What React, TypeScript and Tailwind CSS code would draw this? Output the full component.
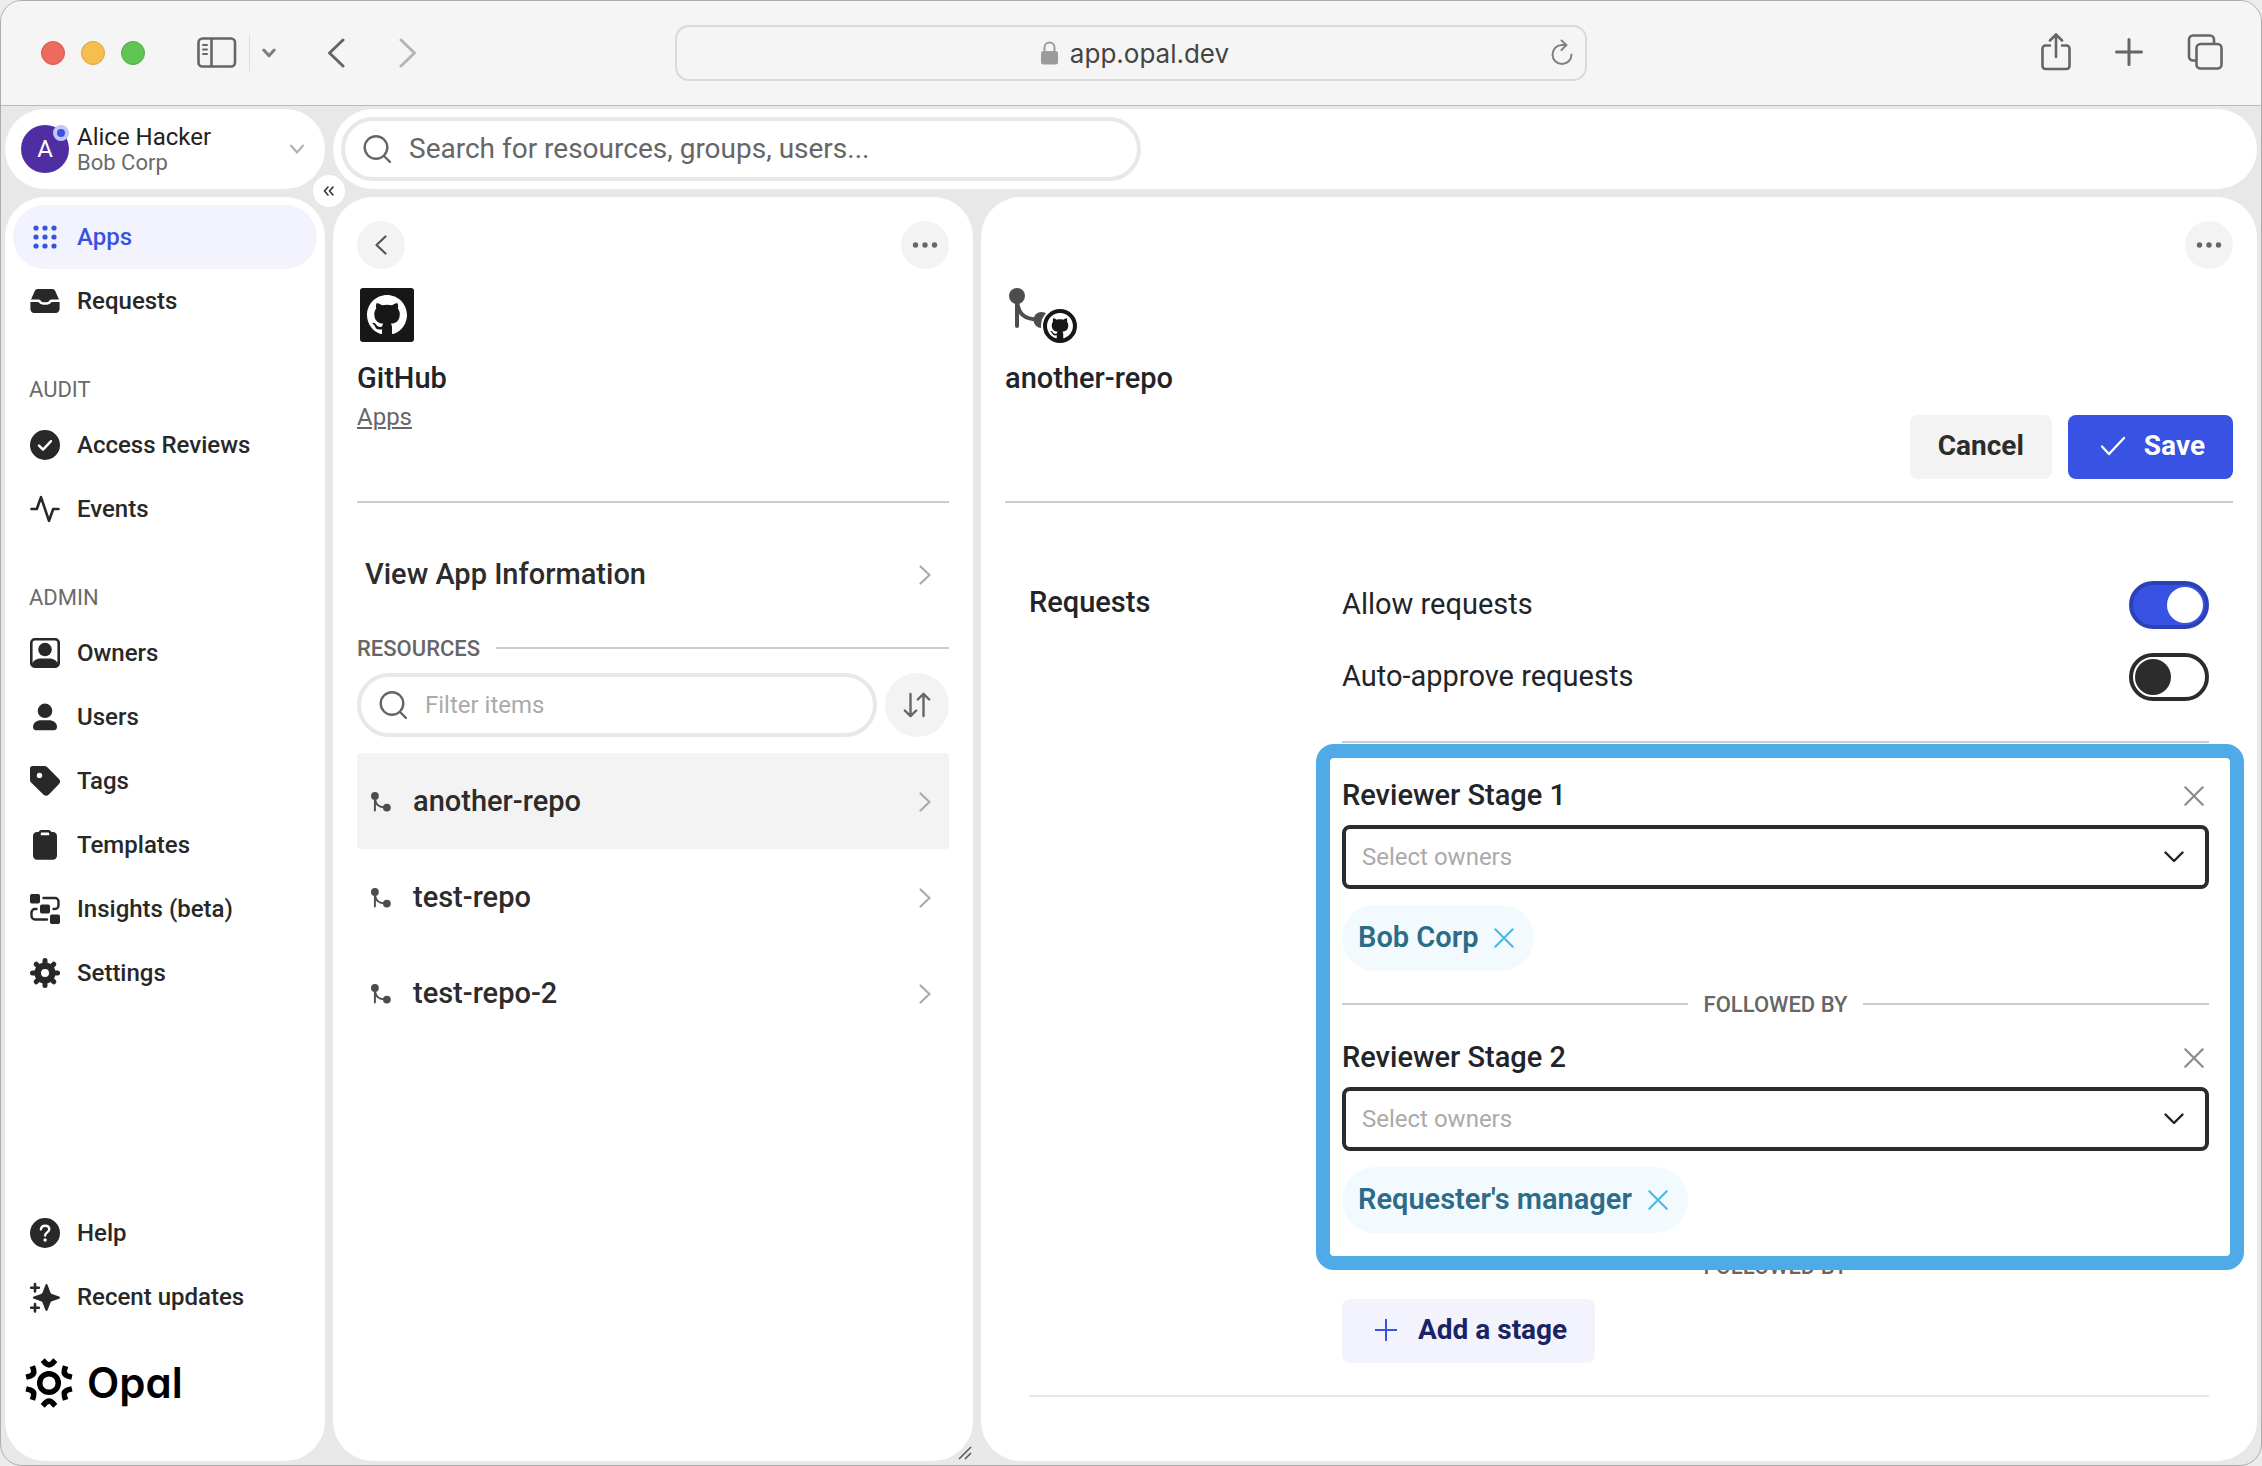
import React, { useState } from 'react';
import { BsGithub } from 'react-icons/bs';

interface IconProps {
  className?: string;
}

const AppsIcon = () => (
  <svg viewBox="0 0 32 32" className="w-8 h-8" fill="currentColor">
    {[7, 16, 25].map((y) => [7, 16, 25].map((x) => <circle key={`${x}-${y}`} cx={x} cy={y} r="2.6" />))}
  </svg>
);

const RequestsIcon = () => (
  <svg viewBox="0 0 32 32" className="w-8 h-8" fill="currentColor">
    <path d="M8.6 4h14.8c1.2 0 2.2.7 2.7 1.8L30 14.4h-7.600c-1 0-1.700.6-2.200 1.300-.7 1-1.500 1.500-4.200 1.500s-3.500-.5-4.200-1.500c-.5-.7-1.200-1.300-2.200-1.300H2l3.900-8.600C6.400 4.700 7.400 4 8.600 4z" />
    <path d="M1.400 17h7.400c.6 0 .9.300 1.300.8 1.200 1.500 2.900 2 5.900 2s4.700-.5 5.900-2c.4-.5.700-.8 1.300-.8h7.400v7c0 2.200-1.600 4-3.800 4H5.200c-2.200 0-3.800-1.800-3.800-4z" />
  </svg>
);

const ReviewsIcon = () => (
  <svg viewBox="0 0 32 32" className="w-8 h-8" fill="none">
    <circle cx="16" cy="16" r="15" fill="currentColor" />
    <path d="M10 16.600l4 4 8-8.400" stroke="#fff" strokeWidth="2.400" strokeLinecap="round" strokeLinejoin="round" />
  </svg>
);

const EventsIcon = () => (
  <svg viewBox="0 0 32 32" className="w-8 h-8" fill="none" stroke="currentColor" strokeWidth="2.600" strokeLinecap="round" strokeLinejoin="round">
    <path d="M2.500 16h5.300L12 4.200l8 23.600L24.200 16h5.300" />
  </svg>
);

const OwnersIcon = () => (
  <svg viewBox="0 0 32 32" className="w-8 h-8" fill="currentColor">
    <rect x="2.300" y="2.300" width="27.400" height="27.400" rx="3.500" fill="none" stroke="currentColor" strokeWidth="2.600" />
    <circle cx="16" cy="12.500" r="6.800" />
    <path d="M3 27c1.500-4 5-5.500 9-5.500h8c4 0 7.500 1.500 9 5.500v1.500a2 2 0 0 1-2 2H5a2 2 0 0 1-2-2z" />
  </svg>
);

const UsersIcon = () => (
  <svg viewBox="0 0 32 32" className="w-8 h-8" fill="currentColor">
    <circle cx="16" cy="9.800" r="7.300" />
    <path d="M4 26c0-4.600 3.800-6.800 8-6.800h8c4.200 0 8 2.200 8 6.800 0 2-1.200 3.200-3 3.200H7c-1.800 0-3-1.200-3-3.200z" />
  </svg>
);

const TagsIcon = () => (
  <svg viewBox="0 0 32 32" className="w-8 h-8" fill="currentColor">
    <path fillRule="evenodd" d="M3.500 1h12c1 0 1.900.4 2.600 1.100l11.900 12c1.400 1.400 1.400 3.600 0 5L19.600 29.800c-1.400 1.400-3.600 1.400-5 0L2.100 17.600C1.400 16.900 1 16 1 15V3.500A2.500 2.500 0 0 1 3.500 1zm7 6.700a2.700 2.700 0 1 0 0 5.400 2.700 2.700 0 0 0 0-5.400z" />
  </svg>
);

const TemplatesIcon = () => (
  <svg viewBox="0 0 32 32" className="w-8 h-8" fill="currentColor">
    <path fillRule="evenodd" d="M12.500 1h7c1.500 0 2.300.7 2.800 2H24c2.300 0 4 1.700 4 4v19.500c0 2.500-1.700 4.200-4 4.200H8c-2.300 0-4-1.700-4-4.200V7c0-2.300 1.700-4 4-4h1.700c.5-1.300 1.300-2 2.800-2zm.5 2.400c-.7 0-1.200.5-1.200 1.200v1.700h8.400V4.600c0-.7-.5-1.200-1.200-1.200z" />
  </svg>
);

const InsightsIcon = () => (
  <svg viewBox="0 0 32 32" className="w-8 h-8" fill="currentColor">
    <rect x="1" y="1" width="10" height="9.500" rx="1.800" />
    <rect x="11" y="11.500" width="10" height="9" rx="1.800" />
    <rect x="21" y="21.500" width="10" height="9.500" rx="1.800" />
    <path d="M14.500 5H26a3.500 3.500 0 0 1 3.500 3.500v4A3.500 3.500 0 0 1 26 16h-1.500M7.500 16H6a3.500 3.500 0 0 0-3.500 3.500V23A3.500 3.500 0 0 0 6 26.500h12" fill="none" stroke="currentColor" strokeWidth="2.400" strokeLinecap="round" />
  </svg>
);

const SettingsIcon = () => (
  <svg viewBox="0 0 32 32" className="w-8 h-8" fill="none" stroke="currentColor">
    <circle cx="16" cy="16" r="7.300" strokeWidth="6.600" />
    {[0, 45, 90, 135, 180, 225, 270, 315].map((a) => (
      <path key={a} d="M16 7V3.500" strokeWidth="5" strokeLinecap="round" transform={`rotate(${a} 16 16)`} />
    ))}
  </svg>
);

const HelpIcon = () => (
  <svg viewBox="0 0 32 32" className="w-8 h-8" fill="none">
    <circle cx="16" cy="16" r="15" fill="currentColor" />
    <path d="M11.900 12.400c.2-2.300 1.900-3.700 4.200-3.700 2.400 0 4.200 1.400 4.200 3.600 0 3.100-4.200 3.100-4.200 6.200" stroke="#fff" strokeWidth="2.400" strokeLinecap="round" />
    <circle cx="16.100" cy="23" r="1.700" fill="#fff" />
  </svg>
);

const UpdatesIcon = () => (
  <svg viewBox="0 0 32 32" className="w-8 h-8" fill="currentColor">
    <path d="M17.500 3c.6 0 .9.400 1.100 1l2.700 7.300c.3.800.8 1.300 1.600 1.600l7.200 2.600c1.200.4 1.200 1.800 0 2.200l-7.200 2.600c-.8.300-1.300.8-1.600 1.600l-2.700 7.100c-.4 1.200-1.800 1.200-2.200 0l-2.700-7.100c-.3-.8-.8-1.300-1.600-1.600l-7.200-2.600c-1.200-.4-1.200-1.800 0-2.200l7.200-2.600c.8-.3 1.300-.8 1.600-1.600L16.400 4c.2-.6.5-1 1.100-1z" />
    <path d="M6 3v7.500M2.200 6.700h7.600M6 23v7.500M2.200 26.700h7.600" stroke="currentColor" strokeWidth="2.600" strokeLinecap="round" />
  </svg>
);

const ChevronRight = ({ className = '' }: IconProps) => (
  <svg viewBox="0 0 12 20" className={`w-3 h-5 ${className}`} fill="none" stroke="currentColor" strokeWidth="2.200" strokeLinecap="round" strokeLinejoin="round">
    <path d="M1.500 1.500L10.500 10l-9 8.500" />
  </svg>
);

const SearchIcon = () => (
  <svg viewBox="0 0 28 28" className="w-7 h-7 shrink-0 text-[#666]" fill="none" stroke="currentColor" strokeWidth="2.400" strokeLinecap="round">
    <circle cx="13" cy="12.500" r="11.300" />
    <path d="M21 21l6 6" />
  </svg>
);

const CloseIcon = ({ className = '' }: IconProps) => (
  <svg viewBox="0 0 20 20" className={`w-5 h-5 ${className}`} fill="none" stroke="currentColor" strokeWidth="2.200" strokeLinecap="round">
    <path d="M1.300 1.300l17.400 17.400M18.700 1.300L1.300 18.700" />
  </svg>
);

const RepoIcon = ({ className = '' }: IconProps) => (
  <svg viewBox="0 0 41 41" className={className} fill="currentColor">
    <circle cx="8" cy="8" r="8" />
    <circle cx="32.500" cy="32" r="8" />
    <path d="M8 10v28M8.500 16c1.500 9 6 15 20 15.500" fill="none" stroke="currentColor" strokeWidth="4" strokeLinecap="round" />
  </svg>
);

const MoreButton = () => (
  <button aria-label="More options" className="flex items-center justify-center w-12 h-12 rounded-full bg-[#f3f3f3] text-[#666]">
    <svg viewBox="0 0 26 6" className="w-[26px] h-[6px]" fill="currentColor">
      <circle cx="3.500" cy="3" r="2.700" />
      <circle cx="13" cy="3" r="2.700" />
      <circle cx="22.500" cy="3" r="2.700" />
    </svg>
  </button>
);

const BrowserToolbar = () => (
  <div className="grid grid-cols-[1fr_minmax(0,912px)_1fr] items-center h-[105px] bg-[#f5f5f5] border-b border-[#bbb] text-[#666]">
    <div className="flex items-center pl-10">
      <div className="flex gap-4">
        <span className="w-6 h-6 rounded-full bg-[#ec6a5e] border border-[#d8574b]" />
        <span className="w-6 h-6 rounded-full bg-[#f4bf4f] border border-[#d9a53c]" />
        <span className="w-6 h-6 rounded-full bg-[#61c554] border border-[#4faa43]" />
      </div>
      <button aria-label="Toggle sidebar" className="ml-[52px]">
        <svg viewBox="0 0 40 32" className="w-10 h-8" fill="none" stroke="currentColor" strokeWidth="2.600" strokeLinecap="round">
          <rect x="1.500" y="1.500" width="36.500" height="28" rx="4" />
          <path d="M14.500 2v27" />
          <path d="M6 8h4M6 12.500h4M6 17h4" strokeWidth="2" />
        </svg>
      </button>
      <span className="ml-3 w-px h-9 bg-[#ddd]" />
      <button aria-label="Tab groups" className="ml-3 text-[#7d7d80]">
        <svg viewBox="0 0 14 10" className="w-[14px] h-[10px]" fill="none" stroke="currentColor" strokeWidth="3" strokeLinecap="round" strokeLinejoin="round">
          <path d="M1.800 2L7 7.800 12.200 2" />
        </svg>
      </button>
      <button aria-label="Back" className="ml-[51px]">
        <svg viewBox="0 0 18 30" className="w-[18px] h-[30px]" fill="none" stroke="currentColor" strokeWidth="3" strokeLinecap="round" strokeLinejoin="round">
          <path d="M16 2L2.500 15 16 28" />
        </svg>
      </button>
      <button aria-label="Forward" className="ml-[54px] text-[#b5b5b5]">
        <svg viewBox="0 0 18 30" className="w-[18px] h-[30px]" fill="none" stroke="currentColor" strokeWidth="3" strokeLinecap="round" strokeLinejoin="round">
          <path d="M2 2l13.500 13L2 28" />
        </svg>
      </button>
    </div>

    <div className="relative flex items-center justify-center gap-3 h-14 pl-2 rounded-[14px] border-2 border-[#dadada]">
      <svg viewBox="0 0 17 24" className="w-[17px] h-6 text-[#9b9b9b]" fill="currentColor">
        <rect x="0" y="10" width="17" height="13.500" rx="2.500" />
        <path d="M3.500 11V6.500a5 5 0 0 1 10 0V11" fill="none" stroke="currentColor" strokeWidth="2" />
      </svg>
      <span className="font-[Inter,sans-serif] text-[26px] text-[#444]">app.opal.dev</span>
      <button aria-label="Reload" className="absolute right-3 text-[#808080]">
        <svg viewBox="0 0 22 28" className="w-[22px] h-7" fill="none" stroke="currentColor" strokeWidth="2" strokeLinecap="round" strokeLinejoin="round">
          <path d="M20.500 15.500a9.500 9.500 0 1 1-9.500-9.500h4M10.500 1.500L15.500 6l-5 5" />
        </svg>
      </button>
    </div>

    <div className="flex items-center justify-end gap-[44px] pr-[38px] pb-0.5">
      <button aria-label="Share">
        <svg viewBox="0 0 30 38" className="w-[30px] h-[38px]" fill="none" stroke="currentColor" strokeWidth="2.600" strokeLinecap="round" strokeLinejoin="round">
          <path d="M9 12.500H4.500a3 3 0 0 0-3 3V33a3 3 0 0 0 3 3h21a3 3 0 0 0 3-3V15.500a3 3 0 0 0-3-3H21M15 24V2M9 7.500L15 1.500l6 6" />
        </svg>
      </button>
      <button aria-label="New tab">
        <svg viewBox="0 0 28 28" className="w-7 h-7" fill="none" stroke="currentColor" strokeWidth="3" strokeLinecap="round">
          <path d="M14 1.500v25M1.500 14h25" />
        </svg>
      </button>
      <button aria-label="Show tabs">
        <svg viewBox="0 0 36 36" className="w-9 h-9" fill="none" stroke="currentColor" strokeWidth="2.600">
          <rect x="9.500" y="10" width="25" height="24.500" rx="4" />
          <path d="M9.500 26.500H6a4 4 0 0 1-4-4V5.500a4 4 0 0 1 4-4h17a4 4 0 0 1 4 4V10" />
        </svg>
      </button>
    </div>
  </div>
);

interface NavItemProps {
  label: string;
  icon: React.ReactNode;
  active?: boolean;
}

const NavItem: React.FC<NavItemProps> = ({ label, icon, active }) => (
  <a
    href="#"
    className={`flex items-center gap-4 h-16 pl-4 rounded-full text-2xl font-medium ${
      active ? 'bg-[#f3f3fd] text-[#3852e3]' : 'text-[#282828]'
    }`}
  >
    {icon}
    <span>{label}</span>
  </a>
);

const NavHeading = ({ children }: { children: React.ReactNode }) => (
  <h2 className="mt-8 h-12 pl-4 text-[22px] leading-[50px] text-[#6b6b6b]">{children}</h2>
);

const OpalLogo = () => (
  <div className="flex items-center gap-[13px] h-[50px] mt-[29px] mb-[53px] pl-[11px] text-black">
    <svg viewBox="-25 -25 50 50" className="w-[50px] h-[50px]" fill="none" stroke="currentColor" strokeWidth="5.500">
      <circle r="9.300" />
      {[0, 60, 120, 180, 240, 300].map((a) => (
        <path key={a} d="M-6.300-22.800L-3.500-19.800Q0-16.600 3.500-19.800L6.300-22.800" transform={`rotate(${a})`} />
      ))}
    </svg>
    <span className="font-[Inter,sans-serif] text-[42px] leading-[50px] font-semibold [font-feature-settings:'cv11']">Opal</span>
  </div>
);

const Sidebar = () => (
  <nav className="flex flex-col w-80 shrink-0 p-2 pb-0 rounded-[40px] bg-white">
    <NavItem label="Apps" icon={<AppsIcon />} active />
    <NavItem label="Requests" icon={<RequestsIcon />} />
    <NavHeading>AUDIT</NavHeading>
    <NavItem label="Access Reviews" icon={<ReviewsIcon />} />
    <NavItem label="Events" icon={<EventsIcon />} />
    <NavHeading>ADMIN</NavHeading>
    <NavItem label="Owners" icon={<OwnersIcon />} />
    <NavItem label="Users" icon={<UsersIcon />} />
    <NavItem label="Tags" icon={<TagsIcon />} />
    <NavItem label="Templates" icon={<TemplatesIcon />} />
    <NavItem label="Insights (beta)" icon={<InsightsIcon />} />
    <NavItem label="Settings" icon={<SettingsIcon />} />
    <div className="mt-auto">
      <NavItem label="Help" icon={<HelpIcon />} />
      <NavItem label="Recent updates" icon={<UpdatesIcon />} />
      <OpalLogo />
    </div>
  </nav>
);

const AccountCard = () => (
  <div className="relative w-80 shrink-0">
    <button className="flex items-center w-full h-20 pl-4 pr-[21px] rounded-full bg-white text-left">
      <span className="relative flex items-center justify-center w-12 h-12 rounded-full bg-[#4f2da3] text-2xl text-white">
        A
        <span className="absolute top-0 right-0 w-4 h-4 rounded-full border-4 border-[#c3c8f6] bg-[#3852e3]" />
      </span>
      <span className="flex-1 pt-0.5 ml-2">
        <span className="block text-2xl leading-[26px] text-[#222]">Alice Hacker</span>
        <span className="block text-[22px] leading-[26px] text-[#6b6b6b]">Bob Corp</span>
      </span>
      <svg viewBox="0 0 14 10" className="w-[14px] h-[10px] text-[#b0b0b0]" fill="none" stroke="currentColor" strokeWidth="2" strokeLinecap="round" strokeLinejoin="round">
        <path d="M1 1.500l6 7 6-7" />
      </svg>
    </button>
    <button
      aria-label="Collapse sidebar"
      className="absolute -right-5 -bottom-[18px] z-10 flex items-center justify-center w-8 h-8 rounded-full bg-white text-[#333]"
    >
      <svg viewBox="0 0 12 10" className="w-3 h-[10px]" fill="none" stroke="currentColor" strokeWidth="1.600" strokeLinecap="round" strokeLinejoin="round">
        <path d="M5 1L1.500 5 5 9M10 1L6.500 5 10 9" />
      </svg>
    </button>
  </div>
);

const repos = ['another-repo', 'test-repo', 'test-repo-2'];

const ResourcePanel = () => (
  <section className="relative w-[640px] shrink-0 p-6 rounded-[40px] bg-white">
    <header className="h-[282px] border-b-2 border-[#ccc]">
      <div className="flex justify-between">
        <button aria-label="Go back" className="flex items-center justify-center w-12 h-12 rounded-full bg-[#f3f3f3] text-[#555]">
          <ChevronRight className="rotate-180" />
        </button>
        <MoreButton />
      </div>
      <div className="flex items-center justify-center w-[54px] h-[54px] mt-[19px] ml-[3px] rounded-[3px] bg-[#181617] text-white">
        <BsGithub size={40} />
      </div>
      <h1 className="mt-4 text-[29px] leading-10 font-medium text-[#212529]">GitHub</h1>
      <a href="#" className="block w-fit text-2xl leading-[38px] text-[#666] underline decoration-2 underline-offset-2">Apps</a>
    </header>

    <a href="#" className="flex items-center justify-between h-24 mt-6 pl-2 pr-[18px] text-[29px] font-medium text-[#2c2c2c]">
      View App Information
      <ChevronRight className="text-[#aaa]" />
    </a>

    <div className="flex items-center gap-4 h-[34px] mt-2">
      <h2 className="text-[22px] font-medium text-[#666]">RESOURCES</h2>
      <span className="flex-1 h-0.5 bg-[#ccc]" />
    </div>

    <div className="flex gap-2 mt-2">
      <label className="flex flex-1 items-center gap-[18px] h-16 px-[18px] rounded-full border-4 border-[#e8e8e8]">
        <SearchIcon />
        <input
          aria-label="Filter items"
          placeholder="Filter items"
          className="w-full text-2xl outline-none placeholder:text-[#aaa]"
        />
      </label>
      <button aria-label="Sort" className="flex items-center justify-center w-16 h-16 rounded-full bg-[#f3f3f3] text-[#666]">
        <svg viewBox="0 0 28 26" className="w-7 h-[26px]" fill="none" stroke="currentColor" strokeWidth="2.400" strokeLinecap="round" strokeLinejoin="round">
          <path d="M7.500 2v22M1.800 18.500l5.700 5.700 5.700-5.700M20.500 24V2M14.800 7.500l5.700-5.700 5.700 5.700" />
        </svg>
      </button>
    </div>

    <ul className="mt-4">
      {repos.map((repo, i) => (
        <li key={repo}>
          <a
            href="#"
            className={`flex items-center h-24 pt-0.5 pl-[14px] pr-[18px] rounded text-[29px] font-medium text-[#2c2c2c] ${i === 0 ? 'bg-[#f3f3f3]' : ''}`}
          >
            <RepoIcon className="w-5 h-5 text-[#4d4d4d]" />
            <span className="flex-1 ml-[22px]">{repo}</span>
            <ChevronRight className="text-[#aaa]" />
          </a>
        </li>
      ))}
    </ul>

    {/* Resize grip */}
    <svg viewBox="0 0 16 16" className="absolute right-0 bottom-0 w-4 h-4 text-[#555]" stroke="currentColor" strokeWidth="1.500">
      <path d="M2 14L14 2M8 14l6-6" />
    </svg>
  </section>
);

interface ToggleProps {
  label: string;
  defaultChecked?: boolean;
}

const Toggle: React.FC<ToggleProps> = ({ label, defaultChecked = false }) => {
  const [checked, setChecked] = useState(defaultChecked);

  return (
    <label className="flex items-center justify-between h-12 text-[29px] text-[#212529]">
      {label}
      <input type="checkbox" className="sr-only" checked={checked} onChange={(e) => setChecked(e.target.checked)} />
      <span
        className={`flex items-center w-20 h-12 px-0.5 rounded-full border-4 ${
          checked ? 'justify-end bg-[#3852e3] border-[#2b41b5]' : 'bg-white border-[#2c2c2c]'
        }`}
      >
        <span className={`w-9 h-9 rounded-full ${checked ? 'bg-white' : 'bg-[#2c2c2c]'}`} />
      </span>
    </label>
  );
};

interface ReviewerStageProps {
  number: number;
  owner: string;
}

const ReviewerStage: React.FC<ReviewerStageProps> = ({ number, owner }) => (
  <div>
    <div className="flex items-center justify-between h-[42px] pr-[5px]">
      <label htmlFor={`stage-${number}`} className="text-[29px] font-medium text-[#212529]">
        Reviewer Stage {number}
      </label>
      <button aria-label={`Remove stage ${number}`} className="text-[#8c8c8c]">
        <CloseIcon />
      </button>
    </div>
    <div className="relative mt-2">
      <select
        id={`stage-${number}`}
        className="w-full h-16 pl-4 rounded-lg border-4 border-[#2c2c2c] bg-white appearance-none text-2xl text-[#aaa]"
      >
        <option>Select owners</option>
      </select>
      <svg viewBox="0 0 20 12" className="absolute right-[25px] top-[26px] w-5 h-3 pointer-events-none text-[#222]" fill="none" stroke="currentColor" strokeWidth="2.400" strokeLinecap="round" strokeLinejoin="round">
        <path d="M1.500 1.500l8.500 8.500 8.500-8.500" />
      </svg>
    </div>
    <div className="flex items-center gap-4 w-fit h-[66px] mt-4 pl-4 pr-5 rounded-full bg-[#f2fafe] text-[29px] font-semibold text-[#2c6c88]">
      {owner}
      <button aria-label={`Remove ${owner}`} className="text-[#4db8ea]">
        <CloseIcon />
      </button>
    </div>
  </div>
);

const FollowedBy = () => (
  <div className="flex items-center gap-4 h-[66px] text-[22px] font-medium text-[#666]">
    <span className="flex-1 h-0.5 bg-[#ccc]" />
    FOLLOWED BY
    <span className="flex-1 h-0.5 bg-[#ccc]" />
  </div>
);

const DetailPanel = () => (
  <section className="flex-1 min-w-0 p-6 rounded-[40px] bg-white">
    <header className="flex flex-col h-[282px] border-b-2 border-[#ccc]">
      <div className="flex justify-end">
        <MoreButton />
      </div>
      <div className="relative h-[54px] mt-[19px]">
        <RepoIcon className="w-[41px] h-[41px] ml-1 text-[#4d4d4d]" />
        <span className="absolute left-9 top-[19px] flex items-center justify-center w-[38px] h-[38px] rounded-full border-2 border-white bg-[#181617] text-white">
          <BsGithub size={26} />
        </span>
      </div>
      <h1 className="mt-4 text-[29px] leading-10 font-medium text-[#212529]">another-repo</h1>
      <div className="flex justify-end gap-4 mt-auto mb-[22px] text-[28px] font-bold">
        <button className="h-16 px-7 pb-0.5 rounded-lg bg-[#f3f3f3] text-[#2c2c2c]">Cancel</button>
        <button className="flex items-center gap-[18px] h-16 pl-8 pr-7 pb-0.5 rounded-lg bg-[#3852e3] text-white">
          <svg viewBox="0 0 26 20" className="w-[26px] h-5" fill="none" stroke="currentColor" strokeWidth="2.400" strokeLinecap="round" strokeLinejoin="round">
            <path d="M2 10.500l7 7.500L24 2" />
          </svg>
          Save
        </button>
      </div>
    </header>

    <div className="flex mt-[78px] mx-6 pb-8 border-b-2 border-[#e8e8e8]">
      <h2 className="w-[313px] shrink-0 text-[29px] leading-[42px] font-medium text-[#212529]">Requests</h2>
      <div className="flex-1 min-w-0">
        <div className="flex flex-col gap-6 pb-10 border-b-2 border-[#ccc]">
          <Toggle label="Allow requests" defaultChecked />
          <Toggle label="Auto-approve requests" />
        </div>
        <div className="relative mt-8">
          <ReviewerStage number={1} owner="Bob Corp" />
          <FollowedBy />
          <ReviewerStage number={2} owner="Requester's manager" />
          {/* Highlight frame around the stages */}
          <div className="absolute -top-[31px] -bottom-[37px] -left-[26px] -right-[35px] z-10 rounded-[18px] border-[14px] border-[#4eabe8] pointer-events-none" />
        </div>
        <FollowedBy />
        <button className="flex items-center gap-5 h-16 pl-8 pr-7 pb-0.5 rounded-lg bg-[#f3f3fd] text-[28px] font-bold text-[#1a2366]">
          <svg viewBox="0 0 24 24" className="w-6 h-6 text-[#3852e3]" fill="none" stroke="currentColor" strokeWidth="2">
            <path d="M12 1v22M1 12h22" />
          </svg>
          Add a stage
        </button>
      </div>
    </div>
  </section>
);

export default function App() {
  return (
    <div className="flex min-h-screen bg-[#ececec] font-[Roboto,sans-serif]">
      <div className="flex flex-col flex-1 rounded-[22px] border border-[#adadad] bg-[#e8e8e8] overflow-hidden">
        <BrowserToolbar />
        <div className="flex flex-col flex-1 gap-2 px-1 pt-[3px] pb-1">
          <div className="flex gap-2">
            <AccountCard />
            <div className="flex-1 p-2 rounded-full bg-white">
              <label className="flex items-center gap-[18px] w-[800px] h-16 px-[18px] rounded-full border-4 border-[#e8e8e8]">
                <SearchIcon />
                <input
                  aria-label="Search"
                  placeholder="Search for resources, groups, users..."
                  className="w-full text-[28px] outline-none placeholder:text-[#666]"
                />
              </label>
            </div>
          </div>
          <main className="flex flex-1 gap-2">
            <Sidebar />
            <ResourcePanel />
            <DetailPanel />
          </main>
        </div>
      </div>
    </div>
  );
}
